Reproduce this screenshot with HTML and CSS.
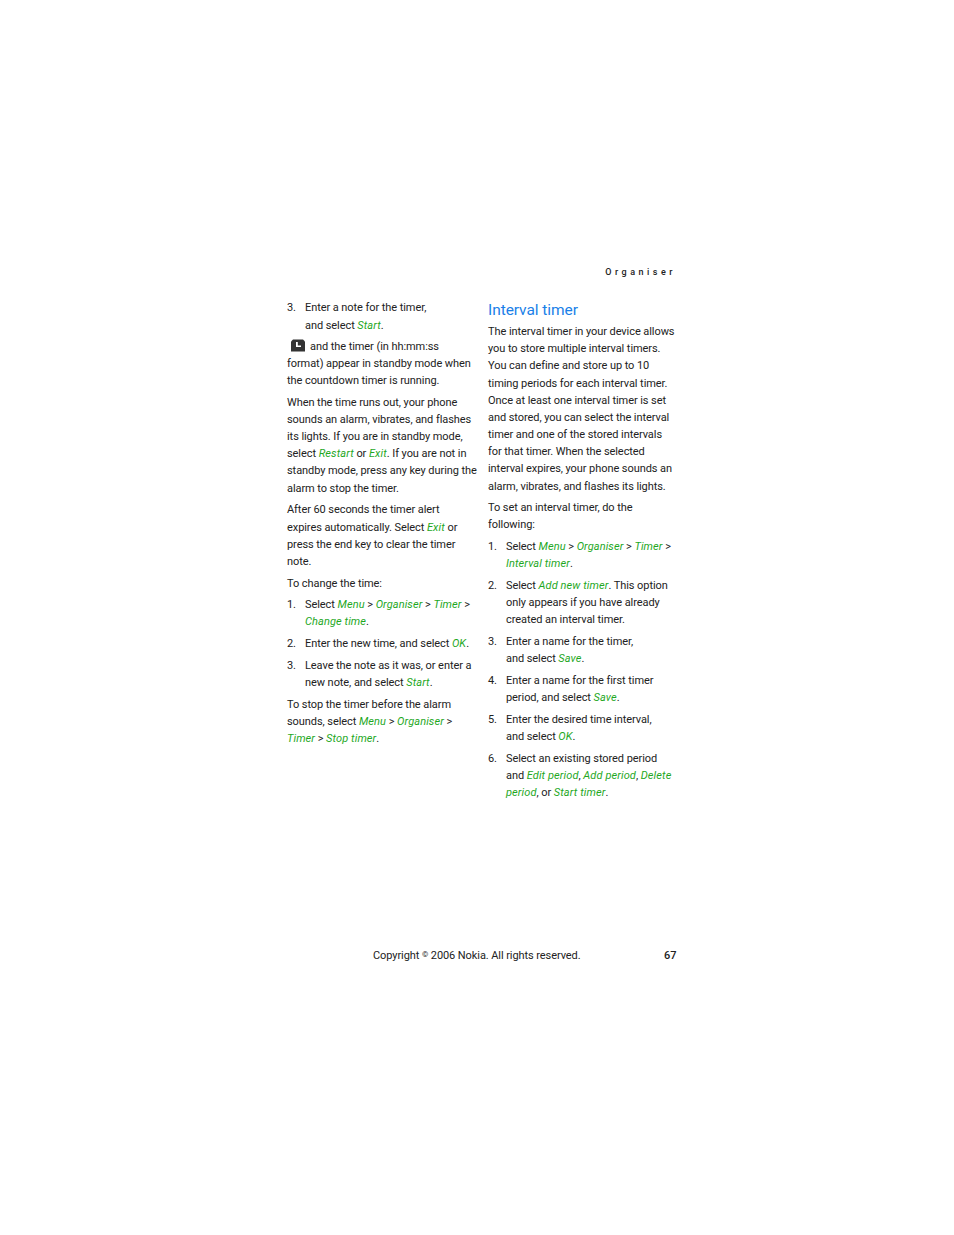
FILE: index.html
```html
<!DOCTYPE html>
<html lang="en">
<head>
    <meta charset="UTF-8">
    <meta name="viewport" content="width=device-width, initial-scale=1.0">
    <title>Organiser</title>
    <link rel="stylesheet" href="styles.css">
</head>
<body>
    <div class="page">
        <div class="running-head">Organiser</div>

        <div class="columns">
            <div class="column">
                <div class="step step-first">
                    <span class="num">3.</span>
                    <p>Enter a note for the timer,<br>and select <em>Start</em>.</p>
                </div>
                <p class="after-step">
                    <svg class="clock" width="16" height="13" viewBox="0 0 16 13">
                        <path d="M3 0.5H13L15 2.5V12.5H1V2.5Z" fill="#333"/>
                        <path d="M6 3V8H11V6.4H7.8V3Z" fill="#fff"/>
                    </svg>and the timer (in hh:mm:ss<br>format) appear in standby mode when<br>the countdown timer is running.
                </p>
                <p>When the time runs out, your phone<br>sounds an alarm, vibrates, and flashes<br>its lights. If you are in standby mode,<br>select <em>Restart</em> or <em>Exit</em>. If you are not in<br>standby mode, press any key during the<br>alarm to stop the timer.</p>
                <p>After 60 seconds the timer alert<br>expires automatically. Select <em>Exit</em> or<br>press the end key to clear the timer<br>note.</p>
                <p>To change the time:</p>
                <div class="step">
                    <span class="num">1.</span>
                    <p>Select <em>Menu</em> &gt; <em>Organiser</em> &gt; <em>Timer</em> &gt;<br><em>Change time</em>.</p>
                </div>
                <div class="step">
                    <span class="num">2.</span>
                    <p>Enter the new time, and select <em>OK</em>.</p>
                </div>
                <div class="step">
                    <span class="num">3.</span>
                    <p>Leave the note as it was, or enter a<br>new note, and select <em>Start</em>.</p>
                </div>
                <p>To stop the timer before the alarm<br>sounds, select <em>Menu</em> &gt; <em>Organiser</em> &gt;<br><em>Timer</em> &gt; <em>Stop timer</em>.</p>
            </div>

            <div class="column">
                <h2>Interval timer</h2>
                <p>The interval timer in your device allows<br>you to store multiple interval timers.<br>You can define and store up to 10<br>timing periods for each interval timer.<br>Once at least one interval timer is set<br>and stored, you can select the interval<br>timer and one of the stored intervals<br>for that timer. When the selected<br>interval expires, your phone sounds an<br>alarm, vibrates, and flashes its lights.</p>
                <p>To set an interval timer, do the<br>following:</p>
                <div class="step">
                    <span class="num">1.</span>
                    <p>Select <em>Menu</em> &gt; <em>Organiser</em> &gt; <em>Timer</em> &gt;<br><em>Interval timer</em>.</p>
                </div>
                <div class="step">
                    <span class="num">2.</span>
                    <p>Select <em>Add new timer</em>. This option<br>only appears if you have already<br>created an interval timer.</p>
                </div>
                <div class="step">
                    <span class="num">3.</span>
                    <p>Enter a name for the timer,<br>and select <em>Save</em>.</p>
                </div>
                <div class="step">
                    <span class="num">4.</span>
                    <p>Enter a name for the first timer<br>period, and select <em>Save</em>.</p>
                </div>
                <div class="step">
                    <span class="num">5.</span>
                    <p>Enter the desired time interval,<br>and select <em>OK</em>.</p>
                </div>
                <div class="step">
                    <span class="num">6.</span>
                    <p>Select an existing stored period<br>and <em>Edit period</em>, <em>Add period</em>, <em>Delete<br>period</em>, or <em>Start timer</em>.</p>
                </div>
            </div>
        </div>

        <div class="footer">
            <span class="copyright">Copyright <span class="copy-mark">©</span> 2006 Nokia. All rights reserved.</span>
            <span class="page-num">67</span>
        </div>
    </div>
</body>
</html>
```

FILE: styles.css
```css
body {
    margin: 0;
    background-color: white;
    font-family: Roboto, "Noto Sans", sans-serif;
    font-size: 11px;
    letter-spacing: -0.07px;
    line-height: 17.15px;
    color: #222;
}

.page {
    width: 954px;
    height: 1235px;
    padding-top: 264px;
    box-sizing: border-box;
}

.running-head {
    width: 676px;
    text-align: right;
    font-size: 9px;
    font-weight: 500;
    letter-spacing: 3.5px;
}

.columns {
    display: flex;
    padding-left: 287px;
    gap: 15px;
    margin-top: 17px;
    height: 649px;
}

.column {
    width: 186px;
    white-space: nowrap;
}

p {
    margin: 0 0 4.6px;
}

em {
    color: #1fa81f;
    letter-spacing: 0.1px;
}

h2 {
    margin: 0 0 2px;
    padding-top: 1px;
    font-size: 15.5px;
    font-weight: normal;
    line-height: 22px;
    color: #1a7fe8;
}

.step {
    display: flex;
}

.num {
    width: 18px;
    flex-shrink: 0;
}

.step-first {
    padding-top: 1px;
}

.step-first p {
    line-height: 18px;
}

.after-step {
    margin-top: -2px;
}

.clock {
    vertical-align: -2px;
    margin: 0 4px 0 3px;
}

.footer {
    display: flex;
    padding-left: 373px;
}

.copyright {
    width: 291px;
    letter-spacing: -0.08px;
}

.copy-mark {
    font-size: 8px;
    line-height: 0;
    vertical-align: 2px;
}

.page-num {
    font-weight: 500;
}
```
